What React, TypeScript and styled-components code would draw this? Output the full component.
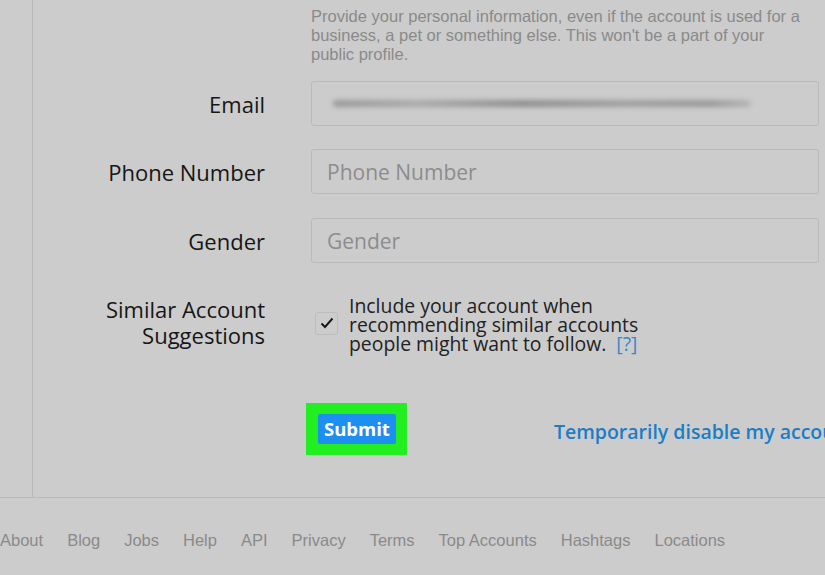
import styled, { createGlobalStyle } from "styled-components";

const GlobalStyle = createGlobalStyle`
    html, body {
        margin: 0;
        padding: 0;
        background: #cccccc;
    }
    body {
        width: 825px;
        height: 575px;
        overflow: hidden;
        font-family: "Open Sans", "Liberation Sans", sans-serif;
    }
`;

const Page = styled.div`
    display: flex;
    flex-direction: column;
    height: 575px;
    overflow: hidden;
`;

const Panel = styled.section`
    margin-left: 32px;
    height: 497px;
    box-sizing: border-box;
    border-left: 1px solid #b9b9b9;
    padding-top: 7px;
    white-space: nowrap;
`;

const Row = styled.div<{ top?: number; align?: string }>`
    display: grid;
    grid-template-columns: 232px 508px;
    column-gap: 46px;
    align-items: ${(props) => props.align || "center"};
    margin-top: ${(props) => props.top || 0}px;
`;

const Label = styled.label`
    text-align: right;
    font-size: 22px;
    line-height: 26px;
    color: #161616;
    white-space: normal;
`;

const Description = styled.p`
    grid-column: 2;
    width: 495px;
    margin: 0;
    font-family: "Liberation Sans", sans-serif;
    font-size: 16.5px;
    line-height: 19px;
    color: #8a8a8a;
    white-space: normal;
`;

const Field = styled.div`
    position: relative;
    height: 45px;
    box-sizing: border-box;
    border: 1px solid #bababa;
    border-radius: 3px;
    display: flex;
    align-items: center;
    padding-left: 15px;
    font-size: 21px;
    color: #8c8c8c;
`;

const Blurred = styled.div`
    width: 418px;
    height: 7px;
    margin-left: 6px;
    border-radius: 4px;
    background: linear-gradient(
        to right,
        #999 0%,
        #aaa 20%,
        #8f8f8f 45%,
        #a0a0a0 70%,
        #999 90%,
        #b5b5b5 100%
    );
    filter: blur(2.5px);
`;

const CheckField = styled.div`
    display: flex;
    align-items: center;
    gap: 11px;
    padding-left: 4px;
`;

const CheckBox = styled.span`
    width: 23px;
    height: 23px;
    flex: none;
    box-sizing: border-box;
    border: 1px solid #bdbdbd;
    border-radius: 3px;
    display: flex;
    align-items: center;
    justify-content: center;
    margin-top: -3px;
`;

const CheckText = styled.span`
    font-size: 19.4px;
    line-height: 19px;
    color: #222;
    white-space: normal;
    width: 310px;
`;

const Help = styled.a`
    color: #3a88cc;
    margin-left: 10px;
`;

const Actions = styled.div`
    grid-column: 2;
    display: flex;
    align-items: center;
`;

const Highlight = styled.div`
    margin-left: -5px;
    padding: 11px 11px 11px 12px;
    background: #22ee22;
`;

const SubmitButton = styled.button`
    display: block;
    border: none;
    border-radius: 2px;
    background: #1d8ff0;
    color: #fff;
    font-family: "Open Sans", sans-serif;
    font-weight: 700;
    font-size: 18.5px;
    line-height: 30px;
    padding: 0 6px;
`;

const DisableLink = styled.a`
    margin-left: 147px;
    margin-top: 4px;
    font-size: 19.5px;
    font-weight: 600;
    color: #1a7ec6;
`;

const Footer = styled.footer`
    border-top: 1px solid #b9b9b9;
    display: flex;
    gap: 24px;
    padding-top: 33px;
    white-space: nowrap;
`;

const FooterLink = styled.a`
    font-family: "Liberation Sans", sans-serif;
    font-size: 16.5px;
    color: #8a8a8a;
`;

const footerLinks = [
    "About",
    "Blog",
    "Jobs",
    "Help",
    "API",
    "Privacy",
    "Terms",
    "Top Accounts",
    "Hashtags",
    "Locations",
];

function App() {
    return (
        <Page>
            <GlobalStyle />
            <Panel>
                <Row>
                    <span />
                    <Description>
                        Provide your personal information, even if the account is
                        used for a business, a pet or something else. This won't be
                        a part of your public profile.
                    </Description>
                </Row>
                <Row top={17}>
                    <Label>Email</Label>
                    <Field>
                        <Blurred />
                    </Field>
                </Row>
                <Row top={23}>
                    <Label>Phone Number</Label>
                    <Field>Phone Number</Field>
                </Row>
                <Row top={24}>
                    <Label>Gender</Label>
                    <Field>Gender</Field>
                </Row>
                <Row top={33} align="start">
                    <Label>Similar Account Suggestions</Label>
                    <CheckField>
                        <CheckBox>
                            <svg width="14" height="12" viewBox="0 0 14 12">
                                <path
                                    d="M1.5 6.5 L5 10 L12.5 1.5"
                                    fill="none"
                                    stroke="#1a1a1a"
                                    strokeWidth="2"
                                />
                            </svg>
                        </CheckBox>
                        <CheckText>
                            Include your account when recommending similar accounts
                            people might want to follow.<Help>[?]</Help>
                        </CheckText>
                    </CheckField>
                </Row>
                <Row top={50}>
                    <Actions>
                        <Highlight>
                            <SubmitButton>Submit</SubmitButton>
                        </Highlight>
                        <DisableLink>Temporarily disable my account</DisableLink>
                    </Actions>
                </Row>
            </Panel>
            <Footer>
                {footerLinks.map((link) => (
                    <FooterLink key={link}>{link}</FooterLink>
                ))}
            </Footer>
        </Page>
    );
}

export default App;
